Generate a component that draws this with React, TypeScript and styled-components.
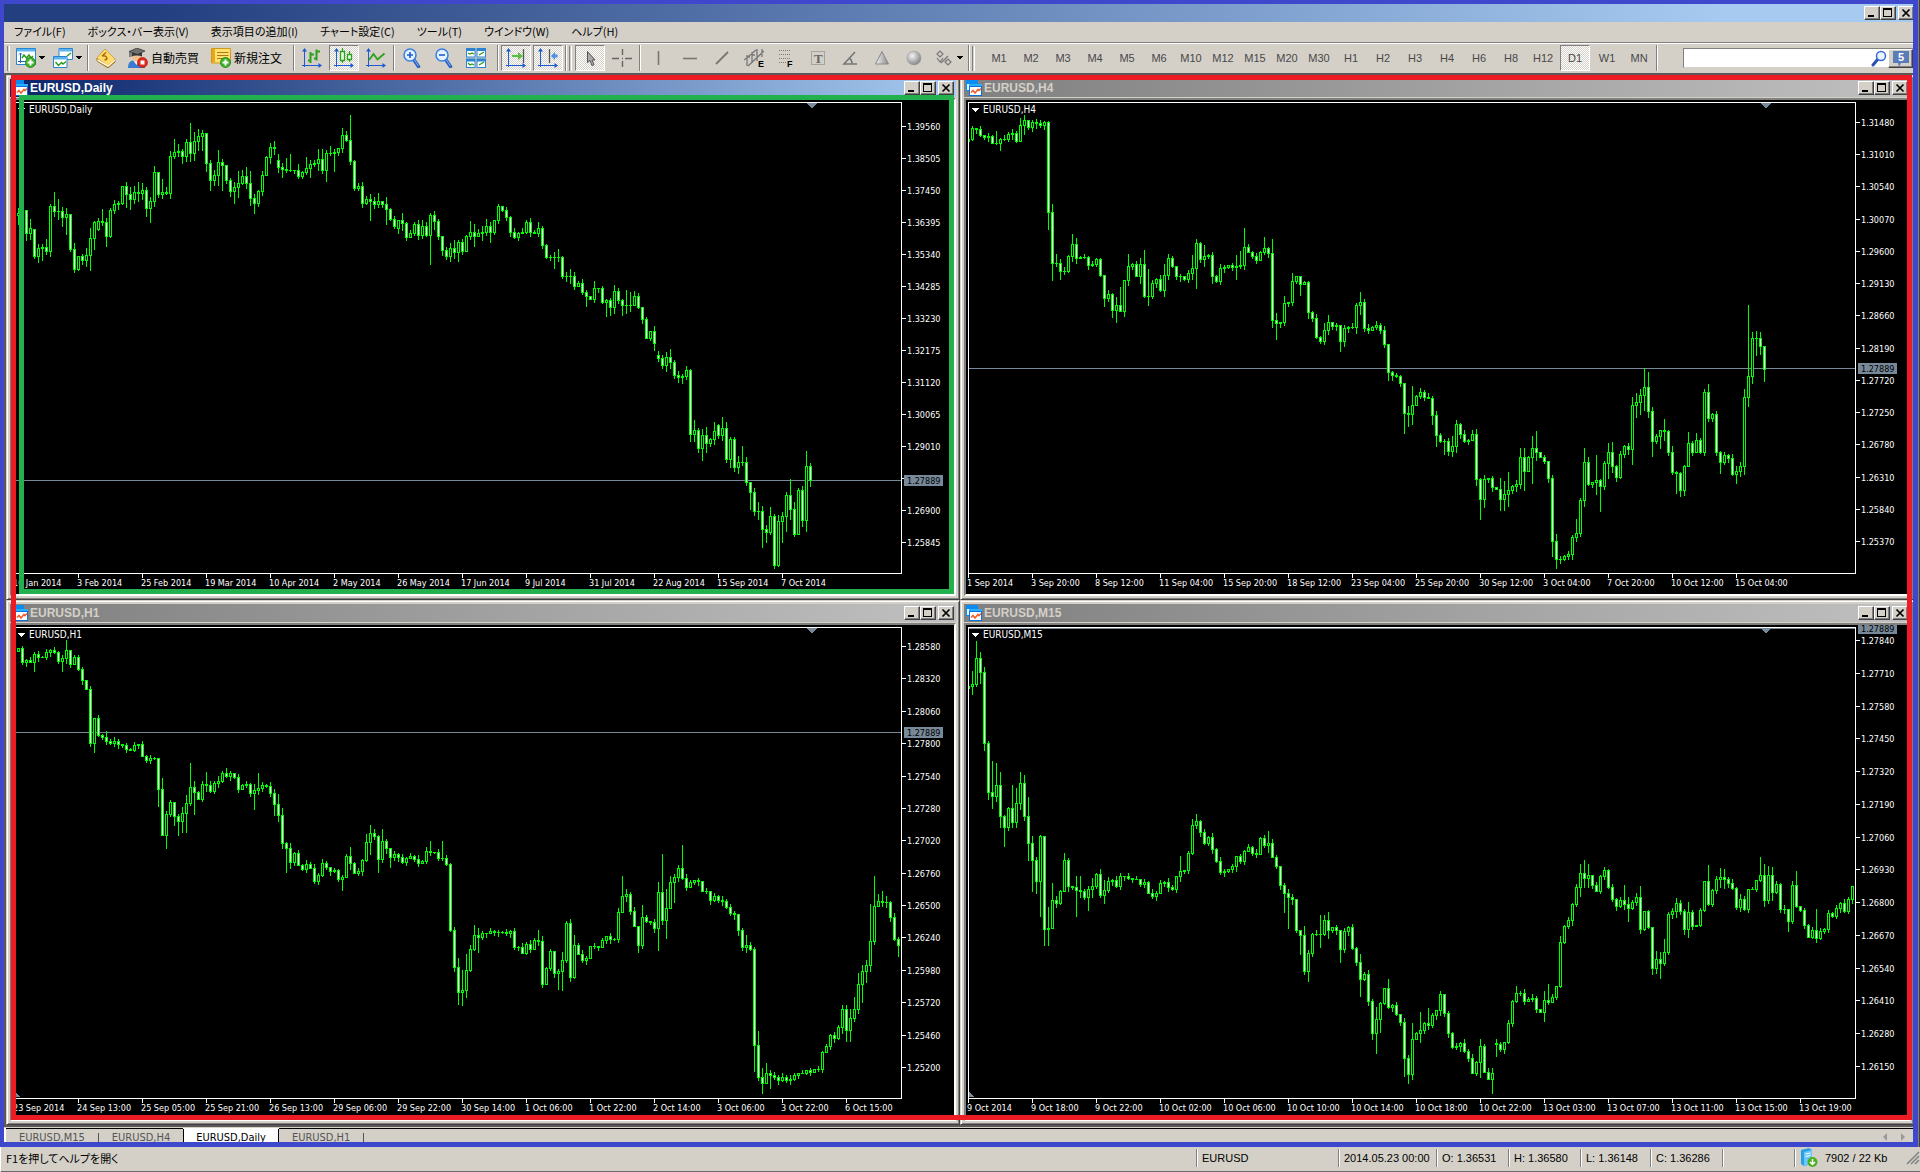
import React from "react";
import styled, { createGlobalStyle, css } from "styled-components";

const FACE = "#d4d0c8";
const SHADE = "#808080";
const DARK = "#404040";
const LIME = "#00ff00";
const SLATE = "#778899";
const SANS = '"Liberation Sans", Arial, "Noto Sans CJK JP", sans-serif';
const NARROW = '"DejaVu Sans Condensed", "Liberation Sans", sans-serif';
const JP = '"Noto Sans CJK JP", sans-serif';

const GlobalStyle = createGlobalStyle`
  * { box-sizing: border-box; }
  body { margin: 0; background: ${FACE}; font-family: ${JP}; }
  button, input { font: inherit; color: inherit; margin: 0; }
`;

const raised = css`
  border: 1px solid;
  border-color: #fff ${DARK} ${DARK} #fff;
  box-shadow: inset -1px -1px 0 ${SHADE};
`;

const pressedFace = css`
  border: 1px solid;
  border-color: ${SHADE} #fff #fff ${SHADE};
  background: repeating-conic-gradient(#fff 0 25%, ${FACE} 0 50%) 0 0 / 2px 2px;
`;

const Page = styled.div`
  display: flex;
  flex-direction: column;
  min-height: 100vh;
  background: ${FACE};
`;

const Shell = styled.div`
  position: relative;
  display: flex;
  flex-direction: column;
  padding: 4px 6px 0 4px;
  box-shadow: inset -1px 0 0 ${DARK}, inset -2px 0 0 ${SHADE};
`;

const Outline = styled.div<{ $color: string; $inset: string; $width: string }>`
  position: absolute;
  inset: ${(p) => p.$inset};
  border: solid ${(p) => p.$color};
  border-width: ${(p) => p.$width};
  pointer-events: none;
`;

const AppTitle = styled.header`
  display: flex;
  align-items: center;
  justify-content: flex-end;
  height: 18px;
  background: linear-gradient(90deg, #243f80 0, #243f80 8%, #a6caf0 90%);
`;

const CaptionButtons = styled.div`
  display: flex;
  flex: none;
  margin-left: auto;
`;

const CaptionButton = styled.button<{ $apart?: boolean }>`
  ${raised}
  display: grid;
  place-items: center;
  width: 16px;
  height: 14px;
  padding: 0;
  margin-left: ${(p) => (p.$apart ? 2 : 0)}px;
  background: ${FACE};
`;

const MenuBar = styled.nav`
  display: flex;
  align-items: center;
  height: 20px;
  padding: 0 0 2px 10px;
  gap: 22px;
`;

const MenuButton = styled.button`
  padding: 0;
  border: 0;
  background: none;
  font-family: ${JP};
  font-size: 11px;
  line-height: 18px;
  font-feature-settings: "palt";
  white-space: nowrap;
  color: #000;
`;

const ToolBar = styled.div`
  display: flex;
  align-items: center;
  height: 31px;
  padding-left: 3px;
  border-top: 1px solid ${SHADE};
  box-shadow: inset 0 1px 0 #fff;
`;

const Grip = styled.span<{ $gap?: number }>`
  flex: none;
  width: 3px;
  height: 25px;
  margin-right: ${(p) => p.$gap ?? 3}px;
  border-left: 1px solid ${SHADE};
  border-right: 1px solid #fff;
`;

const Rule = styled.span`
  flex: none;
  width: 2px;
  height: 26px;
  margin: 0 2px;
  border-left: 1px solid ${SHADE};
  border-right: 1px solid #fff;
`;

const Group = styled.div<{ $tail?: boolean }>`
  display: flex;
  align-items: center;
  gap: 2px;
  margin-right: ${(p) => (p.$tail ? 4 : 0)}px;
`;

const Tool = styled.button<{ $on?: boolean; $pad?: number }>`
  display: flex;
  align-items: center;
  justify-content: center;
  gap: 3px;
  flex: none;
  width: ${(p) => (p.$pad ? "auto" : "30px")};
  height: 26px;
  padding: 0 ${(p) => p.$pad ?? 0}px;
  border: 1px solid transparent;
  background: none;
  font-family: ${JP};
  font-size: 12px;
  line-height: 16px;
  white-space: nowrap;
  ${(p) => p.$on && pressedFace}
`;

const Frame = styled(Tool)`
  font-family: ${SANS};
  font-size: 11px;
  color: #484848;
`;

const Search = styled.label`
  display: flex;
  align-items: center;
  flex: 1;
  height: 20px;
  min-width: 80px;
  margin-left: 23px;
  border: 1px solid;
  border-color: ${SHADE} ${FACE} ${FACE} ${SHADE};
  background: #fff;
`;

const SearchInput = styled.input`
  flex: 1;
  min-width: 0;
  height: 18px;
  padding: 0 4px;
  border: 0;
  outline: 0;
  background: none;
  font-size: 12px;
`;

const ChatButton = styled.button`
  ${raised}
  display: grid;
  place-items: center;
  width: 25px;
  height: 19px;
  padding: 0;
  background: ${FACE};
`;

const Workspace = styled.main`
  position: relative;
  display: grid;
  grid-template-columns: 1fr 1fr;
  border: solid #5c5858;
  border-width: 2px 0 2px 2px;
`;

const ChartWindow = styled.section`
  position: relative;
  display: flex;
  flex-direction: column;
  min-width: 0;
  padding: 2px;
  border: 1px solid;
  border-color: ${FACE} ${DARK} ${DARK} ${FACE};
  box-shadow: inset 1px 1px 0 #fff, inset -1px -1px 0 ${SHADE};
  background: ${FACE};
`;

const WindowFrame = styled.div`
  padding: 1px;
`;

const WindowTitle = styled.header<{ $active?: boolean }>`
  display: flex;
  align-items: center;
  gap: 2px;
  height: 18px;
  padding: 0 2px;
  background: ${(p) =>
    p.$active
      ? "linear-gradient(90deg, #0a246a, #a6caf0)"
      : "linear-gradient(90deg, #808080, #c0c0c0)"};
  color: ${(p) => (p.$active ? "#fff" : FACE)};
`;

const WindowName = styled.h2`
  margin: 0;
  font: bold 12px/16px "Liberation Sans", Arial, sans-serif;
`;

const Client = styled.div`
  display: grid;
  grid-template-columns: 1fr 52px;
  grid-template-rows: 474px 20px;
  margin-top: 1px;
  border: 2px solid;
  border-color: ${SHADE} #fff #fff ${SHADE};
  background: #000;
  overflow: hidden;
`;

const PlotBox = styled.div`
  margin: 2px 0 0 2px;
  border: 1px solid #fff;
  overflow: hidden;
`;

const Drawing = styled.svg`
  display: block;
  width: 100%;
  height: 100%;
  overflow: visible;
  font-family: ${NARROW};
  font-size: 9px;
`;

const TimeRow = styled.div`
  grid-column: 1 / 3;
  padding-left: 2px;
`;

const Tabs = styled.div`
  display: flex;
  height: 19px;
  margin-top: 1px;
  padding-left: 2px;
  background: #fff;
  font-family: ${NARROW};
`;

const Tab = styled.button<{ $active?: boolean }>`
  display: flex;
  align-items: center;
  height: 19px;
  padding: 0 13px;
  border: 0;
  border-top: 1px solid ${(p) => (p.$active ? "#fff" : "#000")};
  background: ${(p) => (p.$active ? "#fff" : FACE)};
  box-shadow: ${(p) => (p.$active ? "inset -1px 0 0 #000, inset 1px 0 0 #000" : "none")};
  font-size: 11px;
  line-height: 16px;
  color: ${(p) => (p.$active ? "#000" : "#555")};
`;

const TabMark = styled.span`
  width: 1px;
  height: 19px;
  border-top: 1px solid #000;
  background: linear-gradient(${FACE} 4px, #555 4px);
`;

const TabFill = styled.div`
  display: flex;
  flex: 1;
  justify-content: flex-end;
  gap: 14px;
  padding: 4px 9px 0 0;
  border-top: 1px solid #000;
  background: ${FACE};
`;

const StatusBar = styled.footer`
  display: flex;
  align-items: center;
  height: 26px;
  padding: 0 0 2px 5px;
  border-left: 1px solid #fff;
  border-bottom: 2px solid #6a6868;
  font-family: ${SANS};
  font-size: 11px;
  line-height: 16px;
  color: #000;
`;

const Hint = styled.span`
  flex: 1;
  font-family: ${JP};
  font-feature-settings: "palt";
`;

const Cell = styled.span<{ $w: number }>`
  display: flex;
  align-items: center;
  gap: 7px;
  flex: none;
  width: ${(p) => p.$w}px;
  height: 18px;
  padding-left: 5px;
  border-left: 1px solid ${SHADE};
  box-shadow: inset 1px 0 0 #fff;
  white-space: pre;
`;

/* ------------------------------------------------------------------ data */

type Wicks = Record<number, [number, number]>;

interface Series {
  name: string;
  /** x of the first candle, in pixels from the left border */
  start: number;
  /** levels per pixel and pixel offset of level zero */
  scale: number;
  shift: number;
  closes: number[];
  wicks: Wicks;
  top: number;
  step: number;
  firstY: number;
  lastY: number;
  times: string[];
  folded?: boolean;
}

const nums = (s: string) => s.trim().split(/\s+/).map(Number);

const pairs = (s: string): Wicks =>
  Object.fromEntries(
    s.trim().split(/\s+/).map((t) => {
      const [k, h, l] = t.split(":").map(Number);
      return [k, [h, l]];
    })
  );

const daily: Series = {
  name: "EURUSD,Daily",
  start: 3,
  scale: 2.904,
  shift: -23,
  closes: nums(`385 378 445 431 512 487 484 496 367 381 381 399 390 490 548 512 524 507 458 413
    410 412 454 378 361 356 309 330 346 326 328 320 373 352 268 330 324 329 220 210
    205 220 181 213 178 164 155 242 291 275 239 248 291 323 312 300 280 300 344 358
    323 275 225 196 198 254 259 260 262 262 280 268 257 245 242 228 262 213 212 210
    198 161 175 236 313 309 358 347 351 361 351 361 374 403 423 408 416 457 445 417
    451 425 449 393 410 454 495 510 489 500 471 496 454 442 452 444 442 425 440 408
    367 378 399 440 455 445 440 413 442 443 431 478 515 515 515 515 568 570 570 597
    590 617 628 635 605 605 646 640 658 614 640 654 654 654 626 658 695 748 730 763
    808 829 805 818 856 863 860 843 1027 1017 1070 1030 1053 1043 1020 1032 1011 1100 1043 1123
    1110 1110 1168 1197 1252 1252 1303 1314 1267 1407 1282 1267 1206 1247 1317 1192 1277 1122 1162`),
  wicks: pairs(`0:373:418 2:378:466 3:405:463 5:475:529 6:477:522 7:463:505 8:361:510 9:325:395 10:346:404 11:370:423
    12:373:446 13:388:498 14:474:557 17:488:540 18:430:551 19:410:490 21:376:420 22:402:481 27:297:368
    28:310:374 29:308:358 30:296:352 31:300:347 32:310:394 33:339:411 34:250:365 35:278:340 36:288:342
    38:207:342 39:172:226 40:187:220 41:200:242 42:172:234 43:125:234 44:152:231 45:142:203 46:146:203
    47:155:263 48:233:318 49:262:305 50:204:306 51:228:318 54:297:356 55:264:341 56:260:302 57:253:315
    58:264:362 59:332:385 60:318:365 63:184:240 64:178:214 65:215:266 66:241:281 67:226:268 68:215:263
    70:245:285 72:224:272 73:232:281 75:200:262 76:200:270 77:204:292 78:192:217 79:200:263 81:139:208
    82:148:176 83:102:243 84:233:320 86:297:370 88:332:406 90:328:368 92:340:417 96:387:436 101:406:460
    102:413:452 103:387:533 104:380:432 107:486:519 108:474:527 109:465:518 110:466:525 113:409:463
    114:418:481 116:424:464 117:405:450 118:413:469 120:360:414 130:412:453 134:500:545 135:491:525
    138:549:590 139:559:606 142:610:656 144:584:644 147:636:685 148:632:682 149:596:676 151:636:682
    152:610:676 153:616:670 159:715:783 160:787:815 162:790:844 163:781:835 166:855:880 168:840:1047 169:987:1047
    170:1010:1080 171:1013:1103 172:1008:1080 174:993:1057 176:979:1045 177:993:1108 178:1038:1123
    180:1092:1141 181:1063:1117 182:1096:1175 183:1167:1246 184:1185:1262 185:1225:1275 186:1237:1356
    187:1292:1343 188:1240:1317 189:1260:1417 190:1263:1410 191:1254:1343 192:1196:1310 193:1159:1275
    194:1225:1323 195:1185:1312 196:1180:1295 197:1077:1310 198:1112:1178`),
  top: 1.3956,
  step: 0.01055,
  firstY: 23,
  lastY: 439,
  times: ["10 Jan 2014", "3 Feb 2014", "25 Feb 2014", "19 Mar 2014", "10 Apr 2014", "2 May 2014", "26 May 2014",
    "17 Jun 2014", "9 Jul 2014", "31 Jul 2014", "22 Aug 2014", "15 Sep 2014", "7 Oct 2014"],
};

const h4: Series = {
  name: "EURUSD,H4",
  start: -1,
  scale: 2.904,
  shift: -23,
  closes: nums(`170 140 143 161 166 163 182 184 172 170 157 155 177 132 117 137 123 126 130 122
    384 530 532 556 556 512 477 518 513 513 538 535 520 567 634 622 667 654 671 582
    540 533 570 533 626 626 590 578 611 565 518 541 570 570 577 560 547 474 519 510
    509 570 585 547 543 538 543 540 536 486 499 512 522 500 489 503 698 706 703 648
    646 585 570 593 587 675 691 747 757 727 703 715 712 757 720 716 716 654 645 720
    726 718 712 725 767 847 858 860 881 968 970 944 919 905 920 923 972 1031 1049 1049
    1077 1063 1000 1027 1047 1046 1028 1158 1218 1160 1157 1182 1187 1216 1203 1192 1180 1172 1096 1136
    1096 1070 1080 1095 1107 1157 1340 1391 1390 1383 1377 1326 1316 1220 1110 1172 1167 1163 1178 1113
    1081 1120 1152 1087 1064 1073 943 936 916 892 962 1047 1035 1017 1018 1081 1137 1142 1192 1122
    1055 1079 1046 1079 907 983 970 1079 1108 1090 1098 1145 1136 1120 920 860 750 750 773 840`),
  wicks: pairs(`7:148:186 8:168:203 13:110:177 14:102:157 17:112:140 20:119:432 21:360:580 22:506:541 23:520:578 25:508:558
    26:447:527 27:458:530 33:517:570 34:566:655 36:620:687 37:630:702 38:600:672 40:504:594 43:517:590
    44:494:630 45:550:652 49:534:626 56:508:577 57:462:603 59:478:540 61:500:590 67:508:578 68:498:545
    69:430:550 74:457:506 76:462:718 77:676:751 79:627:712 81:560:652 83:570:625 85:585:690 89:705:768
    90:682:738 93:712:786 94:712:772 97:648:735 98:616:680 99:635:728 104:713:775 105:766:870 109:880:1025
    110:947:1004 111:890:998 116:918:1000 117:960:1062 119:1042:1086 121:1035:1092 122:986:1080
    127:1014:1175 128:1157:1274 129:1147:1240 133:1156:1248 134:1165:1250 135:1137:1237 138:1068:1186
    139:1070:1190 141:1034:1170 142:1018:1104 146:1147:1382 147:1318:1417 152:1275:1340 154:1070:1236
    155:1095:1175 157:1090:1202 158:1160:1251 160:1054:1155 161:1052:1137 166:920:1114 167:910:980
    168:898:970 169:837:958 170:848:980 171:950:1092 173:1016:1070 174:984:1045 176:1063:1145 177:1135:1198
    178:1138:1208 180:1022:1122 182:1024:1080 184:897:1088 185:883:990 188:1076:1140 192:1120:1170
    194:897:1143 195:653:947 196:733:880 197:729:800 198:733:795 199:772:874`),
  top: 1.3148,
  step: 0.0047,
  firstY: 19,
  lastY: 438,
  times: ["1 Sep 2014", "3 Sep 20:00", "8 Sep 12:00", "11 Sep 04:00", "15 Sep 20:00", "18 Sep 12:00", "23 Sep 04:00",
    "25 Sep 20:00", "30 Sep 12:00", "3 Oct 04:00", "7 Oct 20:00", "10 Oct 12:00", "15 Oct 04:00"],
};

const h1: Series = {
  name: "EURUSD,H1",
  start: 3,
  scale: 2.958,
  shift: -28,
  closes: nums(`143 184 177 182 160 168 168 155 149 155 179 173 149 188 170 205 238 262 422 350
    400 404 416 424 418 426 430 440 443 428 427 461 472 468 468 560 694 632 598 640
    654 629 600 553 567 588 545 546 565 540 534 513 520 513 524 558 547 545 571 563
    555 548 550 572 602 637 720 733 776 748 783 795 780 793 830 812 779 790 801 800
    826 820 757 778 808 802 770 717 689 697 766 713 735 760 751 760 775 762 758 766
    777 773 743 745 744 763 762 781 977 1085 1159 1153 1093 1031 990 998 986 984 978 983
    983 982 984 980 1027 1027 1043 1018 1032 1007 1010 1135 1088 1039 1103 1096 1066 956 1114 1020
    1047 1066 1058 1024 1023 1025 1007 995 1003 1003 922 877 869 921 965 1020 938 950 951 970
    864 946 910 834 818 794 822 848 834 828 832 860 862 888 875 886 889 909 925 930
    977 1025 1020 1031 1315 1412 1428 1398 1406 1410 1421 1410 1419 1416 1405 1400 1398 1391 1396 1388
    1386 1338 1320 1288 1295 1262 1210 1271 1236 1210 1135 1096 1079 1010 906 891 893 894 937 1003
    1020`),
  wicks: pairs(`4:155:209 11:163:209 12:118:185 15:163:207 18:255:432 19:350:449 22:388:425 35:467:608 36:527:695
    37:625:733 39:598:665 40:633:695 41:612:686 42:577:685 43:482:605 44:535:632 47:509:566 52:497:525
    59:545:618 60:512:575 64:560:637 65:574:653 66:616:735 67:715:805 68:718:792 76:766:815 80:795:832
    81:812:857 82:751:818 83:731:795 87:693:772 88:666:750 90:695:805 91:676:775 93:735:790 103:713:755
    106:713:770 108:778:980 110:1060:1194 111:1095:1197 112:1048:1175 114:961:1034 115:970:1040 130:975:1020
    131:995:1144 135:1092:1150 136:1040:1153 137:950:1072 138:944:1127 139:990:1118 151:817:922 152:855:890
    155:963:1040 156:902:1030 160:834:1035 161:751:957 162:855:1000 163:817:910 164:811:892 166:725:825
    180:930:992 182:992:1040 184:1025:1392 185:1275:1419 186:1383:1458 187:1370:1430 188:1390:1444
    202:1313:1337 206:1198:1282 207:1198:1305 208:1210:1305 209:1175:1245 210:1103:1222 211:1080:1190
    212:1065:1130 213:900:1096 214:817:1018 215:869:905 216:861:905 217:875:908 220:998:1052`),
  top: 1.2858,
  step: 0.0026,
  firstY: 18,
  lastY: 439,
  times: ["23 Sep 2014", "24 Sep 13:00", "25 Sep 05:00", "25 Sep 21:00", "26 Sep 13:00", "29 Sep 06:00", "29 Sep 22:00",
    "30 Sep 14:00", "1 Oct 06:00", "1 Oct 22:00", "2 Oct 14:00", "3 Oct 06:00", "3 Oct 22:00", "6 Oct 15:00"],
  folded: true,
};

const m15: Series = {
  name: "EURUSD,M15",
  start: -1,
  scale: 2.958,
  shift: -28,
  closes: nums(`253 247 172 214 424 567 580 547 640 672 616 657 599 541 640 719 770 832 698 972
    970 886 897 862 770 847 850 857 862 878 855 847 811 872 857 830 829 847 815 816
    822 825 826 840 833 866 875 866 838 835 848 856 816 803 799 749 667 655 687 720
    701 738 773 804 801 796 788 758 773 741 730 748 750 705 724 719 759 787 842 866
    878 885 977 990 1097 1044 989 988 988 947 975 968 977 1033 979 967 1029 1070 1120 1105
    1187 1280 1238 1193 1147 1205 1197 1226 1249 1355 1401 1300 1282 1272 1252 1256 1228 1212 1166 1223
    1280 1321 1320 1309 1333 1355 1400 1368 1320 1395 1416 1398 1314 1328 1308 1252 1185 1163 1162 1187
    1180 1178 1209 1218 1184 1188 1174 1143 1012 963 948 900 850 808 822 814 842 860 815 799
    850 884 905 888 898 910 892 879 972 920 968 1090 1062 1074 1040 930 920 897 920 974
    923 965 960 918 832 900 857 825 820 824 837 853 907 883 913 856 855 828 814 887
    812 865 840 915 914 950 844 904 917 960 996 975 1001 980 972 927 935 912 897 919
    884 847`),
  wicks: pairs(`1:210:277 2:121:253 3:154:245 4:198:443 5:418:588 6:476:614 7:482:595 8:510:672 9:635:727 11:547:672
    12:557:670 13:510:618 14:518:650 15:583:768 16:697:862 17:760:866 18:695:935 19:698:1021 20:908:1020
    21:838:970 24:748:862 27:815:935 28:815:880 30:845:917 31:823:880 33:797:878 34:827:896 53:758:830
    56:648:750 57:633:675 75:684:745 79:838:922 80:855:970 83:975:1046 84:965:1106 85:1035:1127 88:932:1026
    89:932:990 90:923:1000 93:976:1072 98:1046:1172 101:1180:1300 102:1205:1340 103:1190:1278 105:1121:1206
    109:1236:1408 110:1346:1428 111:1252:1416 113:1218:1308 115:1207:1270 118:1157:1228 128:1300:1410
    130:1383:1417 131:1385:1458 132:1300:1348 137:1143:1190 144:1156:1245 145:1136:1195 148:993:1145
    153:781:875 154:769:850 155:781:850 164:843:914 165:878:950 168:846:985 170:918:970 171:966:1107
    172:1038:1103 173:1041:1118 174:1003:1080 175:923:1047 177:882:938 180:893:998 184:830:920 185:784:902
    188:793:850 189:796:852 198:760:830 199:780:905 200:787:895 201:790:886 205:913:978 206:830:955
    207:803:908 212:913:1012`),
  top: 1.2784,
  step: 0.0013,
  firstY: 12,
  lastY: 438,
  times: ["9 Oct 2014", "9 Oct 18:00", "9 Oct 22:00", "10 Oct 02:00", "10 Oct 06:00", "10 Oct 10:00", "10 Oct 14:00",
    "10 Oct 18:00", "10 Oct 22:00", "13 Oct 03:00", "13 Oct 07:00", "13 Oct 11:00", "13 Oct 15:00", "13 Oct 19:00"],
  folded: true,
};

const GAPS: Record<string, Record<number, number>> = {
  "EURUSD,Daily": { 4: 434, 20: 434, 65: 233, 95: 431, 160: 799, 175: 1003 },
  "EURUSD,M15": { 132: 1309 },
};

const LAST_PRICE = 1.27889;

function candlePaths(s: Series) {
  const y = (v: number) => Math.round(v / s.scale + s.shift);
  let wick = "";
  let up = "";
  let down = "";
  s.closes.forEach((close, k) => {
    const open = GAPS[s.name]?.[k] ?? (k ? s.closes[k - 1] : close + 8);
    const hi = Math.min(open, close);
    const lo = Math.max(open, close);
    const [h, l] = s.wicks[k] ?? [hi - ((k * 7) % 13), lo + ((k * 5) % 14)];
    const x = s.start + k * 4;
    const a = y(hi);
    const b = y(lo);
    const top = Math.min(y(h), a);
    const end = Math.max(y(l), b) + 1;
    wick += `M${x} ${top}h1V${end}h-1z`;
    if (b === a) wick += `M${x - 1} ${a}h3v1h-3z`;
    else {
      wick += `M${x - 1} ${a}h3V${b + 1}h-3z`;
      if (b - a > 1) {
        const core = `M${x} ${a + 1}h1V${b}h-1z`;
        if (close > open) down += core;
        else up += core;
      }
    }
  });
  return { wick, up, down };
}

const priceY = (s: Series, price: number) =>
  Math.round(s.firstY + ((s.top - price) / (s.step * 13)) * (s.lastY - s.firstY));

/* --------------------------------------------------------------- widgets */

const MinGlyph = () => (
  <svg width="12" height="10" shapeRendering="crispEdges"><path d="M2 7h6v2H2z" /></svg>
);
const MaxGlyph = () => (
  <svg width="12" height="10" shapeRendering="crispEdges">
    <path d="M1 0h9v9H1zM2 2v6h7V2z" fillRule="evenodd" />
  </svg>
);
const CloseGlyph = () => (
  <svg width="12" height="10"><path d="M2.5 1.5l7 7M9.5 1.5l-7 7" stroke="#000" strokeWidth="1.7" /></svg>
);

const Captions = () => (
  <CaptionButtons>
    <CaptionButton aria-label="Minimize"><MinGlyph /></CaptionButton>
    <CaptionButton aria-label="Maximize"><MaxGlyph /></CaptionButton>
    <CaptionButton aria-label="Close" $apart><CloseGlyph /></CaptionButton>
  </CaptionButtons>
);

const WindowIcon = () => (
  <svg width="16" height="16" shapeRendering="crispEdges">
    <path d="M0 0h12v11H0z" fill="#0a8cf0" />
    <path d="M1 4h10v6H1z" fill="#e8f4ff" />
    <path d="M3 4h13v12H3z" fill="#0a6fe0" />
    <path d="M3 4h13v2H3z" fill="#28b0ff" />
    <path d="M4 7h11v8H4z" fill="#fff" />
    <path d="M5 12.500l2-2 2 2.500 3-3.500 1 1 2-2" fill="none" stroke="#f06030" strokeWidth="1.600" shapeRendering="auto" />
  </svg>
);

function Chart({ series: s }: { series: Series }) {
  const { wick, up, down } = candlePaths(s);
  const last = priceY(s, LAST_PRICE);
  return (
    <Client>
      <PlotBox>
        <Drawing role="img" aria-label={s.name} shapeRendering="crispEdges">
          <rect x="0" y={last} width="100%" height="1" fill={SLATE} />
          <path d={wick} fill={LIME} />
          <path d={up} fill="#000" />
          <path d={down} fill="#fff" />
          <path d="M791 0h11l-5.500 5.500z" fill={SLATE} />
          {s.folded && <path d="M0 464l5 5H0z" fill={SLATE} />}
          <path d="M2 5h8l-4 4z" fill="#fff" />
          <text x="14" y="10" fontSize="10" fill="#fff">{s.name}</text>
        </Drawing>
      </PlotBox>
      <Drawing shapeRendering="crispEdges">
        {Array.from({ length: 14 }, (_, i) => {
          const price = s.top - s.step * i;
          const y = priceY(s, price) + 3;
          const hidden = Math.abs(y - last - 3) < 8;
          return (
            <g key={i} fill="#fff">
              <rect x="0" y={y} width="4" height="1" />
              {!hidden && <text x="5" y={y + 4}>{price.toFixed(5)}</text>}
            </g>
          );
        })}
        <rect x="2" y={last - 2} width="39" height="11" fill={SLATE} />
        <text x="5" y={last + 7} fill="#000">{LAST_PRICE}</text>
      </Drawing>
      <TimeRow>
        <Drawing shapeRendering="crispEdges" fill="#fff">
          {s.times.map((t, i) => (
            <g key={t}>
              <rect x={i * 64} y="0" width="1" height="4" />
              <text x={i * 64 - 1} y="12">{t}</text>
            </g>
          ))}
        </Drawing>
      </TimeRow>
    </Client>
  );
}

/* ----------------------------------------------------------------- icons */

const Arrow = () => (
  <svg width="6" height="4" shapeRendering="crispEdges"><path d="M0 0h6L3 3.500z" /></svg>
);

const Plus = ({ x, y }: { x: number; y: number }) => (
  <g>
    <circle cx={x} cy={y} r="5" fill="#3fb52a" stroke="#1d7d12" strokeWidth=".8" />
    <path d={`M${x - 3} ${y}h6M${x} ${y - 3}v6`} stroke="#fff" strokeWidth="2" />
  </g>
);

const Axes = () => (
  <g>
    <path d="M2.500 1v18M0 17.500h19" fill="none" stroke="#1c5cd0" />
    <path d="M0 3.500L2.500 0 5 3.500zM16.500 15l3.500 2.500-3.500 2.500z" fill="#1c5cd0" />
  </g>
);

const Lens = () => (
  <g>
    <path d="M12 12l4.500 6.500" stroke="#2a62c0" strokeWidth="3.500" strokeLinecap="round" />
    <path d="M12.500 12l4 6" stroke="#7ab4f4" strokeWidth="1" />
    <circle cx="8" cy="7" r="6" fill="#e4f2ff" stroke="#3a80e0" strokeWidth="1.500" />
  </g>
);

const icons: Record<string, React.ReactNode> = {
  newChart: (<>
    <path d="M.5.5h19v16H.5z" fill="#fff" stroke="#2a84d2" />
    <path d="M1 1h18v2.500H1z" fill="#5ab4f0" />
    <path d="M4.500 5v10M2 13.500h15M3 6.500L4.500 5 6 6.500" fill="none" stroke="#2464b8" />
    <path d="M6 10l2-3 2.500 3L13 7l2 3 2-2" fill="none" stroke="#2c9c20" strokeWidth="1.500" />
    <Plus x={14.500} y={14.500} />
  </>),
  profiles: (<>
    <path d="M6 .5h13.500v11H6z" fill="#fff" stroke="#2a84d2" />
    <path d="M6.500 1h12.500v2.500H6.500z" fill="#5ab4f0" />
    <path d="M14 8l4-3" stroke="#2c9c20" strokeWidth="1.500" />
    <path d="M.5 8.500H14v11H.5z" fill="#fff" stroke="#2a84d2" />
    <path d="M1 9h12.500v2.500H1z" fill="#5ab4f0" />
    <path d="M2.500 14l3 3.500 3-3 1.500 1.500 3-2.500" fill="none" stroke="#2c9c20" strokeWidth="1.500" />
  </>),
  editor: (<>
    <path d="M1 10L9 1l10 10v3l-7 6L1 13z" fill="#c88a10" stroke="#8a5a08" strokeWidth=".7" />
    <path d="M1 10L9 1l10 10-7 6z" fill="#ffdc6a" />
    <path d="M1.500 12l10.500 6 7-6" fill="none" stroke="#fff8e0" strokeWidth="1.500" />
    <path d="M6 8l4-3.500M6 8c4-1 6 2 4 4M10 12l-1.500-.5" fill="none" stroke="#a86a08" strokeWidth="1.500" />
  </>),
  robot: (<>
    <path d="M0 20c0-6 3-8 8-8s9 2 9 8z" fill="#3a7ad0" />
    <path d="M5 12l3.500 5L12 12z" fill="#f4f4f4" />
    <circle cx="8.500" cy="9" r="4.500" fill="#f0c090" />
    <path d="M3.500 4.500h10.500v4c-3-1.500-7.500-1.500-10.500 0z" fill="#3a3a3a" />
    <path d="M1 3.500L9 0l8 3-7.500 3.500z" fill="#707070" stroke="#222" strokeWidth=".6" />
    <path d="M2 4v5" stroke="#333" />
    <circle cx="14.500" cy="14.500" r="5" fill="#e02a1c" stroke="#a01408" strokeWidth=".6" />
    <path d="M12.500 12.500h4v4h-4z" fill="#fff" />
  </>),
  order: (<>
    <path d="M.5.5h19v14.500H.5z" fill="#ffe070" stroke="#d09818" />
    <path d="M1 1h3v13.500H1z" fill="#e8a818" />
    <path d="M6 4.500h11.500M6 7.500h11.500M6 10.500h8" stroke="#b07a10" />
    <Plus x={14.500} y={14.500} />
  </>),
  bars: (<>
    <Axes />
    <path d="M8.500 4v11M6 12.500h2M9 6.500h3M14.500 1.500v11M12 10.500h2M15 3.500h3" stroke="#2ca01c" strokeWidth="2" />
  </>),
  candles: (<>
    <Axes />
    <path d="M8.500 0v15M15.500 3v11" stroke="#2ca01c" strokeWidth="1.200" />
    <path d="M6.500 3.500h4v9h-4zM13.500 6.500h4v5h-4z" fill="#e8ffe0" stroke="#2ca01c" strokeWidth="1.300" />
  </>),
  line: (<>
    <Axes />
    <path d="M3 12l4.500-6 4 5.500 7-6" fill="none" stroke="#2ca01c" strokeWidth="1.800" />
  </>),
  zoomIn: (<>
    <Lens />
    <path d="M5 7h6M8 4v6" stroke="#1c5cd0" strokeWidth="1.600" />
  </>),
  zoomOut: (<>
    <Lens />
    <path d="M5 7h6" stroke="#1c5cd0" strokeWidth="1.600" />
  </>),
  tile: (<>
    <path d="M0 0h9.500v9.500H0zM10.500 0H20v9.500h-9.500zM0 10.500h9.500V20H0zM10.500 10.500H20V20h-9.500z" fill="#2a84d2" />
    <path d="M1 3h7.500v5.500H1zM11.500 3H19v5.500h-7.500zM1 13.500h7.500V19H1zM11.500 13.500H19V19h-7.500z" fill="#fff" />
    <path d="M2 5l2 1 2-1 2 1M13 7l5-3M2 15l2 2 2-1 2 1M13 17l5-3" fill="none" stroke="#2c9c20" strokeWidth="1.300" />
  </>),
  scroll: (<>
    <Axes />
    <path d="M17.500 1v14" stroke="#555" strokeWidth="1.300" />
    <path d="M6 7h6V4l5 4-5 4V9H6z" fill="#58c040" />
  </>),
  shift: (<>
    <Axes />
    <path d="M11.500 1v14" stroke="#555" strokeWidth="1.300" />
    <path d="M19.500 6.500H17V4l-4 4 4 4V9.500h2.500z" fill="#4a90e8" />
  </>),
  cursor: <path d="M7.500 3.500v11l2.500-2 2 5 2-1-2-4.500h3z" fill="#aaa" stroke="#555" />,
  cross: <path d="M0 10.500h7M13 10.500h7M10.500 1v6M10.500 13v6M10 10.500h1" stroke="#666" strokeWidth="1.400" />,
  vline: <path d="M10.500 3v14" stroke="#777" strokeWidth="1.600" />,
  hline: <path d="M3 10.500h14" stroke="#777" strokeWidth="1.600" />,
  trend: <path d="M4 16L16 4" stroke="#777" strokeWidth="1.800" />,
  channel: (<>
    <path d="M0 12L12 2M4 18L20 3M3 7v11M8 4v11M13 1v12M18 1v8M3 9h3M8 7h3" stroke="#777" strokeWidth="1.300" />
    <text x="14" y="19" fontSize="9" fontWeight="bold" fontFamily="Liberation Sans, sans-serif">E</text>
  </>),
  fibo: (<>
    <path d="M3 2.500h12M3 6.500h12M3 10.500h12M3 14.500h7" stroke="#777" strokeDasharray="1 1" strokeWidth="1.200" />
    <text x="11" y="19" fontSize="9" fontWeight="bold" fontFamily="Liberation Sans, sans-serif">F</text>
  </>),
  label: (<>
    <path d="M3.500 3.500h13v13h-13z" fill="none" stroke="#777" strokeDasharray="1 1" />
    <text x="6" y="15" fontSize="13" fontWeight="bold" fill="#666" fontFamily="Liberation Serif, serif">T</text>
  </>),
  angle: <path d="M17 16H4L15 4M9 10c2 1 3 3 3 6" fill="none" stroke="#777" strokeWidth="1.600" />,
  triangle: <path d="M10 3.500L16.500 16h-13z" fill="url(#gray)" stroke="#888" />,
  ball: <circle cx="10" cy="10" r="7" fill="url(#shine)" stroke="#999" strokeWidth=".5" />,
  shapes: (
    <path d="M3 6l3-3 3 3-3 3zM7 15l7-7M3 10l3 4 3-4M11 14l3-3 3 3-3 3z" fill="none" stroke="#777" strokeWidth="1.200" />
  ),
};

const Icon = ({ name }: { name: string }) => (
  <svg width="20" height="20" viewBox="0 0 20 20">
    <defs>
      <linearGradient id="gray"><stop offset="0" stopColor="#f4f4f4" /><stop offset="1" stopColor="#888" /></linearGradient>
      <radialGradient id="shine" cx=".38" cy=".35" r=".65">
        <stop offset="0" stopColor="#f4f4f4" /><stop offset="1" stopColor="#888" />
      </radialGradient>
    </defs>
    {icons[name]}
  </svg>
);

const IconTool = ({ name, on }: { name: string; on?: boolean }) => (
  <Tool aria-label={name} aria-pressed={on} $on={on}><Icon name={name} /></Tool>
);

const menus = ["ファイル(F)", "ボックス・バー表示(V)", "表示項目の追加(I)", "チャート設定(C)", "ツール(T)", "ウインドウ(W)", "ヘルプ(H)"];
const frames = ["M1", "M2", "M3", "M4", "M5", "M6", "M10", "M12", "M15", "M20", "M30", "H1", "H2", "H3", "H4", "H6", "H8", "H12", "D1", "W1", "MN"];

const Toolbar = () => (
  <ToolBar>
    <Grip />
    <Group>
      <Tool $pad={2} aria-label="New chart"><Icon name="newChart" /><Arrow /></Tool>
      <Tool $pad={2} aria-label="Profiles"><Icon name="profiles" /><Arrow /></Tool>
    </Group>
    <Rule />
    <Group $tail>
      <IconTool name="editor" />
      <Tool $pad={4}><Icon name="robot" />自動売買</Tool>
      <Tool $pad={4}><Icon name="order" />新規注文</Tool>
    </Group>
    <Rule />
    <Group>
      <IconTool name="bars" />
      <IconTool name="candles" on />
      <IconTool name="line" />
    </Group>
    <Rule />
    <Group $tail>
      <IconTool name="zoomIn" />
      <IconTool name="zoomOut" />
      <IconTool name="tile" />
    </Group>
    <Rule />
    <Group>
      <IconTool name="scroll" on />
      <IconTool name="shift" on />
    </Group>
    <Rule />
    <Grip />
    <Group>
      <IconTool name="cursor" on />
      <IconTool name="cross" />
    </Group>
    <Rule />
    <Group>
      {["vline", "hline", "trend", "channel", "fibo", "label", "angle", "triangle", "ball"].map((n) => (
        <IconTool key={n} name={n} />
      ))}
      <Tool $pad={2} aria-label="Shapes"><Icon name="shapes" /><Arrow /></Tool>
    </Group>
    <Rule />
    <Grip $gap={9} />
    <Group>
      {frames.map((f) => (
        <Frame key={f} $on={f === "D1"}>{f}</Frame>
      ))}
    </Group>
    <Rule />
    <Search>
      <SearchInput aria-label="Search" />
      <svg width="17" height="17" viewBox="0 0 17 17">
        <path d="M7 9l-5 6" stroke="#2a52b0" strokeWidth="3" strokeLinecap="round" />
        <circle cx="10" cy="6" r="4.500" fill="#eaf4ff" stroke="#3a6ad8" strokeWidth="1.500" />
      </svg>
      <ChatButton aria-label="Messages">
        <svg width="18" height="17">
          <path d="M1 1h16v12H9l-2 4-1-4H1z" fill="#5a7cb8" />
          <text x="6" y="11" fontSize="11" fontWeight="bold" fill="#fff" fontFamily="Liberation Sans, sans-serif">5</text>
        </svg>
      </ChatButton>
    </Search>
  </ToolBar>
);

export default function App() {
  return (
    <Page>
      <GlobalStyle />
      <Shell>
        <AppTitle><Captions /></AppTitle>
        <MenuBar>{menus.map((m) => <MenuButton key={m}>{m}</MenuButton>)}</MenuBar>
        <Toolbar />
        <Workspace>
          {[daily, h4, h1, m15].map((s) => (
            <ChartWindow key={s.name}>
              <WindowFrame>
                <WindowTitle $active={s === daily}>
                  <WindowIcon />
                  <WindowName>{s.name}</WindowName>
                  <Captions />
                </WindowTitle>
                <Chart series={s} />
              </WindowFrame>
              {s === daily && <Outline $color="#22b14c" $inset="19px 5px 5px 12px" $width="5px" />}
            </ChartWindow>
          ))}
          <Outline $color="#ed1c24" $inset="0 2px 5px 5px" $width="5px" />
        </Workspace>
        <Tabs role="tablist">
          <Tab role="tab">EURUSD,M15</Tab>
          <TabMark />
          <Tab role="tab">EURUSD,H4</Tab>
          <Tab role="tab" aria-selected $active>EURUSD,Daily</Tab>
          <Tab role="tab">EURUSD,H1</Tab>
          <TabMark />
          <TabFill>
            <svg width="4" height="8"><path d="M4 0v8L0 4z" fill="#999" /></svg>
            <svg width="4" height="8"><path d="M0 0v8l4-4z" fill="#999" /></svg>
          </TabFill>
        </Tabs>
        <Outline $color="#3f48cc" $inset="0 2px 0 0" $width="4px 5px 5px 4px" />
      </Shell>
      <StatusBar>
        <Hint>F1を押してヘルプを開く</Hint>
        <Cell $w={142}>EURUSD</Cell>
        <Cell $w={98}>2014.05.23 00:00</Cell>
        <Cell $w={72}>O: 1.36531</Cell>
        <Cell $w={72}>H: 1.36580</Cell>
        <Cell $w={70}>L: 1.36148</Cell>
        <Cell $w={72}>C: 1.36286</Cell>
        <Cell $w={72} />
        <Cell $w={112}>
          <svg width="18" height="20">
            <path d="M1 2l8-2 3 2v14l-8 2-3-2z" fill="#28a0e8" />
            <path d="M4 4l8-2v14l-8 2z" fill="#6cc8f8" />
            <path d="M5.500 6l5-1M5.500 8.500l5-1" stroke="#fff" />
            <circle cx="12.500" cy="14" r="5" fill="#4caf20" />
            <path d="M12.500 11v5M10 14l2.500 2.500L15 14" fill="none" stroke="#fff" strokeWidth="1.500" />
          </svg>
          7902 / 22 Kb
        </Cell>
        <svg width="14" height="14"><path d="M1 13L13 1M5 13l8-8M9 13l4-4" stroke="#808080" strokeWidth="1.500" /></svg>
      </StatusBar>
    </Page>
  );
}
